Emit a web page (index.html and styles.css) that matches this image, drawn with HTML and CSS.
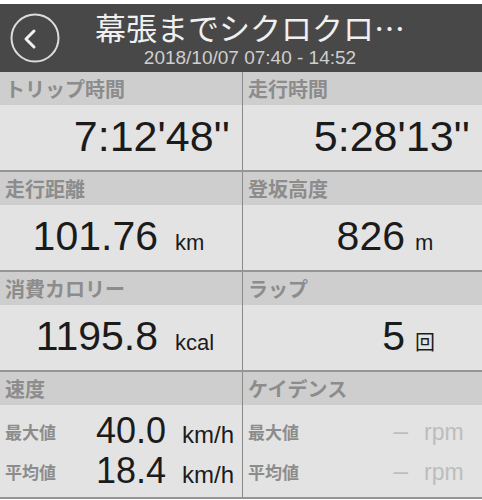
FILE: index.html
```html
<!DOCTYPE html>
<html>
<head>
    <meta charset="UTF-8">
    <meta name="viewport" content="width=device-width, initial-scale=1.0">
    <title>走行記録</title>
    <link rel="stylesheet" href="styles.css">
</head>
<body>
    <header class="header">
        <button class="back" aria-label="戻る">
            <svg width="50" height="50" viewBox="0 0 50 50">
                <circle cx="25" cy="25" r="23.5" fill="none" stroke="#dcdcdc" stroke-width="2"/>
                <path d="M24 18 L16 26 L24 34" fill="none" stroke="#f2f2f2" stroke-width="3" stroke-linecap="round" stroke-linejoin="round"/>
            </svg>
        </button>
        <div class="title-block">
            <div class="title">幕張までシクロクロ…</div>
            <div class="subtitle">2018/10/07 07:40 - 14:52</div>
        </div>
    </header>

    <section class="row">
        <div class="cell">
            <div class="label">トリップ時間</div>
            <div class="value time">7:12'48''</div>
        </div>
        <div class="cell">
            <div class="label">走行時間</div>
            <div class="value time">5:28'13''</div>
        </div>
    </section>

    <section class="row">
        <div class="cell">
            <div class="label">走行距離</div>
            <div class="value">
                <span class="num">101.76</span><span class="unit">km</span>
            </div>
        </div>
        <div class="cell">
            <div class="label">登坂高度</div>
            <div class="value right">
                <span class="num">826</span><span class="unit">m</span>
            </div>
        </div>
    </section>

    <section class="row">
        <div class="cell">
            <div class="label">消費カロリー</div>
            <div class="value">
                <span class="num">1195.8</span><span class="unit">kcal</span>
            </div>
        </div>
        <div class="cell">
            <div class="label">ラップ</div>
            <div class="value right">
                <span class="num">5</span><span class="unit jp">回</span>
            </div>
        </div>
    </section>

    <section class="row">
        <div class="cell">
            <div class="label">速度</div>
            <div class="value sub">
                <div class="sub-row">
                    <span class="sub-label">最大値</span>
                    <span class="sub-num">40.0</span><span class="sub-unit">km/h</span>
                </div>
                <div class="sub-row">
                    <span class="sub-label">平均値</span>
                    <span class="sub-num">18.4</span><span class="sub-unit">km/h</span>
                </div>
            </div>
        </div>
        <div class="cell">
            <div class="label">ケイデンス</div>
            <div class="value sub empty">
                <div class="sub-row">
                    <span class="sub-label">最大値</span>
                    <span class="sub-num">–</span><span class="sub-unit">rpm</span>
                </div>
                <div class="sub-row">
                    <span class="sub-label">平均値</span>
                    <span class="sub-num">–</span><span class="sub-unit">rpm</span>
                </div>
            </div>
        </div>
    </section>
</body>
</html>
```

FILE: styles.css
```css
:root {
    --header: #484848;
    --label-bg: #cecece;
    --label-text: #8c8c8c;
    --value-bg: #e3e3e3;
    --line: #959595;
    --text: #1b1b1b;
    --faint: #bdbdbd;
}

* {
    margin: 0;
    padding: 0;
    box-sizing: border-box;
}

body {
    font-family: "Liberation Sans", "Noto Sans CJK JP", sans-serif;
    background: #fff;
    color: var(--text);
    width: 482px;
    padding-top: 4px;
}

.header {
    height: 68px;
    background: var(--header);
    display: flex;
    align-items: center;
    padding-left: 10px;
    padding-right: 42px;
}

.back {
    width: 50px;
    height: 50px;
    background: none;
    border: none;
    display: flex;
}

.title-block {
    flex: 1;
    align-self: stretch;
    text-align: center;
    padding-top: 6px;
}

.title {
    font-family: "Noto Sans CJK JP", sans-serif;
    font-size: 31px;
    line-height: 34px;
    color: #f0f0f0;
    white-space: nowrap;
}

.subtitle {
    margin-top: 3px;
    font-size: 19px;
    line-height: 22px;
    color: #cfcfcf;
}

.row {
    display: grid;
    grid-template-columns: 242px 1fr;
    border-bottom: 2px solid var(--line);
}

.cell + .cell {
    border-left: 1px solid #8a8a8a;
}

.label {
    height: 33px;
    line-height: 33px;
    padding-left: 5px;
    background: var(--label-bg);
    color: var(--label-text);
    font-family: "Noto Sans CJK JP", sans-serif;
    font-size: 20px;
    font-weight: 700;
}

.value {
    height: 65px;
    background: var(--value-bg);
    display: flex;
    align-items: baseline;
    justify-content: flex-end;
    padding: 5px 5px 0 0;
}

.value.time {
    font-size: 43px;
    line-height: 52px;
    padding-right: 12px;
}

.num {
    font-size: 41px;
    line-height: 52px;
}

.unit {
    width: 62px;
    margin-left: 17px;
    font-size: 22px;
}

.value.right .unit {
    margin-left: 10px;
}

.unit.jp {
    font-family: "Noto Sans CJK JP", sans-serif;
    font-size: 20px;
}

.value.sub {
    height: 92px;
    display: block;
    padding: 6px 0 6px 0;
}

.sub-row {
    height: 40px;
    display: flex;
    align-items: baseline;
}

.sub-label {
    align-self: center;
    width: 60px;
    padding-left: 5px;
    font-family: "Noto Sans CJK JP", sans-serif;
    font-size: 17px;
    font-weight: 700;
    color: var(--label-text);
}

.sub-num {
    flex: 1;
    text-align: right;
    font-size: 36px;
    line-height: 40px;
}

.sub-unit {
    width: 60px;
    margin-left: 16px;
    font-size: 24px;
}

.empty .sub-num,
.empty .sub-unit {
    color: var(--faint);
}

.empty .sub-num {
    font-size: 26px;
    padding-right: 3px;
}

.empty .sub-unit {
    width: 58px;
    margin-left: 13px;
    font-size: 23px;
}
```
